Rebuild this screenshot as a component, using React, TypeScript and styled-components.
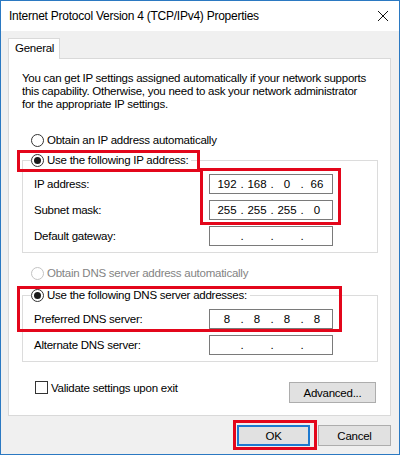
import React from 'react'
import styled, { createGlobalStyle } from 'styled-components'

const GlobalStyle = createGlobalStyle`
  body {
    margin: 0;
    background: #ffffff;
  }
  * {
    box-sizing: border-box;
  }
`

const Window = styled.div`
  position: relative;
  width: 400px;
  height: 455px;
  border: 1px solid #2b79c2;
  background: #f0f0f0;
  display: flex;
  flex-direction: column;
  font-family: 'Liberation Sans', Arial, sans-serif;
  font-size: 11.5px;
  letter-spacing: -0.25px;
  color: #000;
`

const TitleBar = styled.div`
  height: 30px;
  flex: none;
  background: #ffffff;
  display: flex;
  align-items: center;
  justify-content: space-between;
  padding: 0 9px 0 8px;
  font-size: 12px;
`

const CloseButton = styled.span`
  display: flex;
  width: 12px;
  height: 12px;
  margin-right: 1px;
`

const Body = styled.div`
  flex: 1;
  display: flex;
  flex-direction: column;
  padding: 7px 8px 0 7px;
`

const TabStrip = styled.div`
  display: flex;
  height: 20px;
`

const Tab = styled.div`
  position: relative;
  z-index: 1;
  width: 52px;
  height: 21px;
  background: #ffffff;
  border: 1px solid #d9d9d9;
  border-bottom: none;
  padding: 3px 0 0 6px;
`

const Panel = styled.div`
  height: 358px;
  background: #ffffff;
  border: 1px solid #d9d9d9;
  padding: 13px 12px 0 13px;
  display: flex;
  flex-direction: column;
`

const Intro = styled.p`
  margin: 0;
  line-height: 13px;
  white-space: nowrap;
`

const RadioRow = styled.label<{ $top: number; $disabled?: boolean }>`
  display: flex;
  align-items: center;
  height: 16px;
  margin-top: ${({ $top }) => $top}px;
  padding-left: 9px;
  gap: 3px;
  color: ${({ $disabled }) => ($disabled ? '#838383' : '#000')};
  white-space: nowrap;
`

const Radio = styled.span<{ $checked?: boolean; $disabled?: boolean }>`
  position: relative;
  width: 13px;
  height: 13px;
  flex: none;
  border-radius: 50%;
  background: #ffffff;
  border: 1px solid ${({ $disabled }) => ($disabled ? '#c3c3c3' : '#333333')};

  &::after {
    content: '';
    display: ${({ $checked }) => ($checked ? 'block' : 'none')};
    position: absolute;
    left: 2px;
    top: 2px;
    width: 7px;
    height: 7px;
    border-radius: 50%;
    background: #1a1a1a;
  }
`

const GroupBox = styled.div<{ $top: number }>`
  margin-top: ${({ $top }) => $top}px;
  border: 1px solid #dcdcdc;
  padding: 0 0 6px 11px;
  display: flex;
  flex-direction: column;
  gap: 6px;
`

const Legend = styled(RadioRow)`
  align-self: flex-start;
  margin: -9px 0 0 -3px;
  padding: 0 3px 0 0;
  background: #ffffff;
`

const FieldRow = styled.div`
  display: flex;
  align-items: center;
  height: 20px;
`

const FieldLabel = styled.span`
  width: 175px;
  white-space: nowrap;
`

const IpField = styled.div`
  width: 124px;
  height: 20px;
  border: 1px solid #7a7a7a;
  background: #ffffff;
  display: flex;
  align-items: center;
  padding: 0 1px 0 3px;
  letter-spacing: 0;
`

const Octet = styled.span`
  flex: 1;
  text-align: center;
`

const Dot = styled.span`
  width: 2px;
  display: flex;
  justify-content: center;
`

const Footer = styled.div`
  display: flex;
  justify-content: space-between;
  align-items: flex-start;
  margin-top: 19px;
  padding-right: 2px;
`

const CheckRow = styled.label`
  display: flex;
  align-items: center;
  gap: 3px;
  margin-left: 13px;
  height: 13px;
  white-space: nowrap;
`

const CheckBox = styled.span`
  width: 13px;
  height: 13px;
  border: 1px solid #333333;
  background: #ffffff;
`

const Button = styled.button<{ $width: number; $default?: boolean }>`
  width: ${({ $width }) => $width}px;
  height: 21px;
  margin: 1px 0 0;
  padding: 0;
  font: inherit;
  letter-spacing: inherit;
  color: #000;
  background: #e1e1e1;
  border: ${({ $default }) => ($default ? '2px solid #1d79cf' : '1px solid #adadad')};
`

const ButtonBar = styled.div`
  flex: 1;
  display: flex;
  justify-content: flex-end;
  align-items: flex-start;
  gap: 8px;
  padding: 8px 0 0;
`

const Mark = styled.div<{ $x: number; $y: number; $w: number; $h: number }>`
  position: absolute;
  left: ${({ $x }) => $x - 1}px;
  top: ${({ $y }) => $y - 1}px;
  width: ${({ $w }) => $w}px;
  height: ${({ $h }) => $h}px;
  border: 3px solid #e3061b;
  pointer-events: none;
`

function Address({ parts }: { parts?: string[] }) {
  const values = parts || ['', '', '', '']
  return (
    <IpField>
      {values.map((v, i) => (
        <React.Fragment key={i}>
          {i > 0 && <Dot>.</Dot>}
          <Octet>{v}</Octet>
        </React.Fragment>
      ))}
    </IpField>
  )
}

export default function App() {
  return (
    <>
      <GlobalStyle />
      <Window>
        <TitleBar>
          <span>Internet Protocol Version 4 (TCP/IPv4) Properties</span>
          <CloseButton>
            <svg width="12" height="12" viewBox="0 0 12 12">
              <path d="M1 1 L11 11 M11 1 L1 11" stroke="#111" strokeWidth="1" fill="none" />
            </svg>
          </CloseButton>
        </TitleBar>
        <Body>
          <TabStrip>
            <Tab>General</Tab>
          </TabStrip>
          <Panel>
            <Intro>
              You can get IP settings assigned automatically if your network supports
              <br />
              this capability. Otherwise, you need to ask your network administrator
              <br />
              for the appropriate IP settings.
            </Intro>

            <RadioRow $top={21}>
              <Radio />
              Obtain an IP address automatically
            </RadioRow>

            <GroupBox $top={12}>
              <Legend $top={0}>
                <Radio $checked />
                Use the following IP address:
              </Legend>
              <FieldRow>
                <FieldLabel>IP address:</FieldLabel>
                <Address parts={['192', '168', '0', '66']} />
              </FieldRow>
              <FieldRow>
                <FieldLabel>Subnet mask:</FieldLabel>
                <Address parts={['255', '255', '255', '0']} />
              </FieldRow>
              <FieldRow>
                <FieldLabel>Default gateway:</FieldLabel>
                <Address />
              </FieldRow>
            </GroupBox>

            <RadioRow $top={12} $disabled>
              <Radio $disabled />
              Obtain DNS server address automatically
            </RadioRow>

            <GroupBox $top={14}>
              <Legend $top={0}>
                <Radio $checked />
                Use the following DNS server addresses:
              </Legend>
              <FieldRow>
                <FieldLabel>Preferred DNS server:</FieldLabel>
                <Address parts={['8', '8', '8', '8']} />
              </FieldRow>
              <FieldRow>
                <FieldLabel>Alternate DNS server:</FieldLabel>
                <Address />
              </FieldRow>
            </GroupBox>

            <Footer>
              <CheckRow>
                <CheckBox />
                Validate settings upon exit
              </CheckRow>
              <Button $width={87}>Advanced...</Button>
            </Footer>
          </Panel>
          <ButtonBar>
            <Button $width={73} $default>OK</Button>
            <Button $width={73}>Cancel</Button>
          </ButtonBar>
        </Body>

        <Mark $x={17} $y={150} $w={183} $h={22} />
        <Mark $x={200} $y={168} $w={141} $h={57} />
        <Mark $x={17} $y={286} $w={325} $h={46} />
        <Mark $x={233} $y={420} $w={84} $h={30} />
      </Window>
    </>
  )
}
